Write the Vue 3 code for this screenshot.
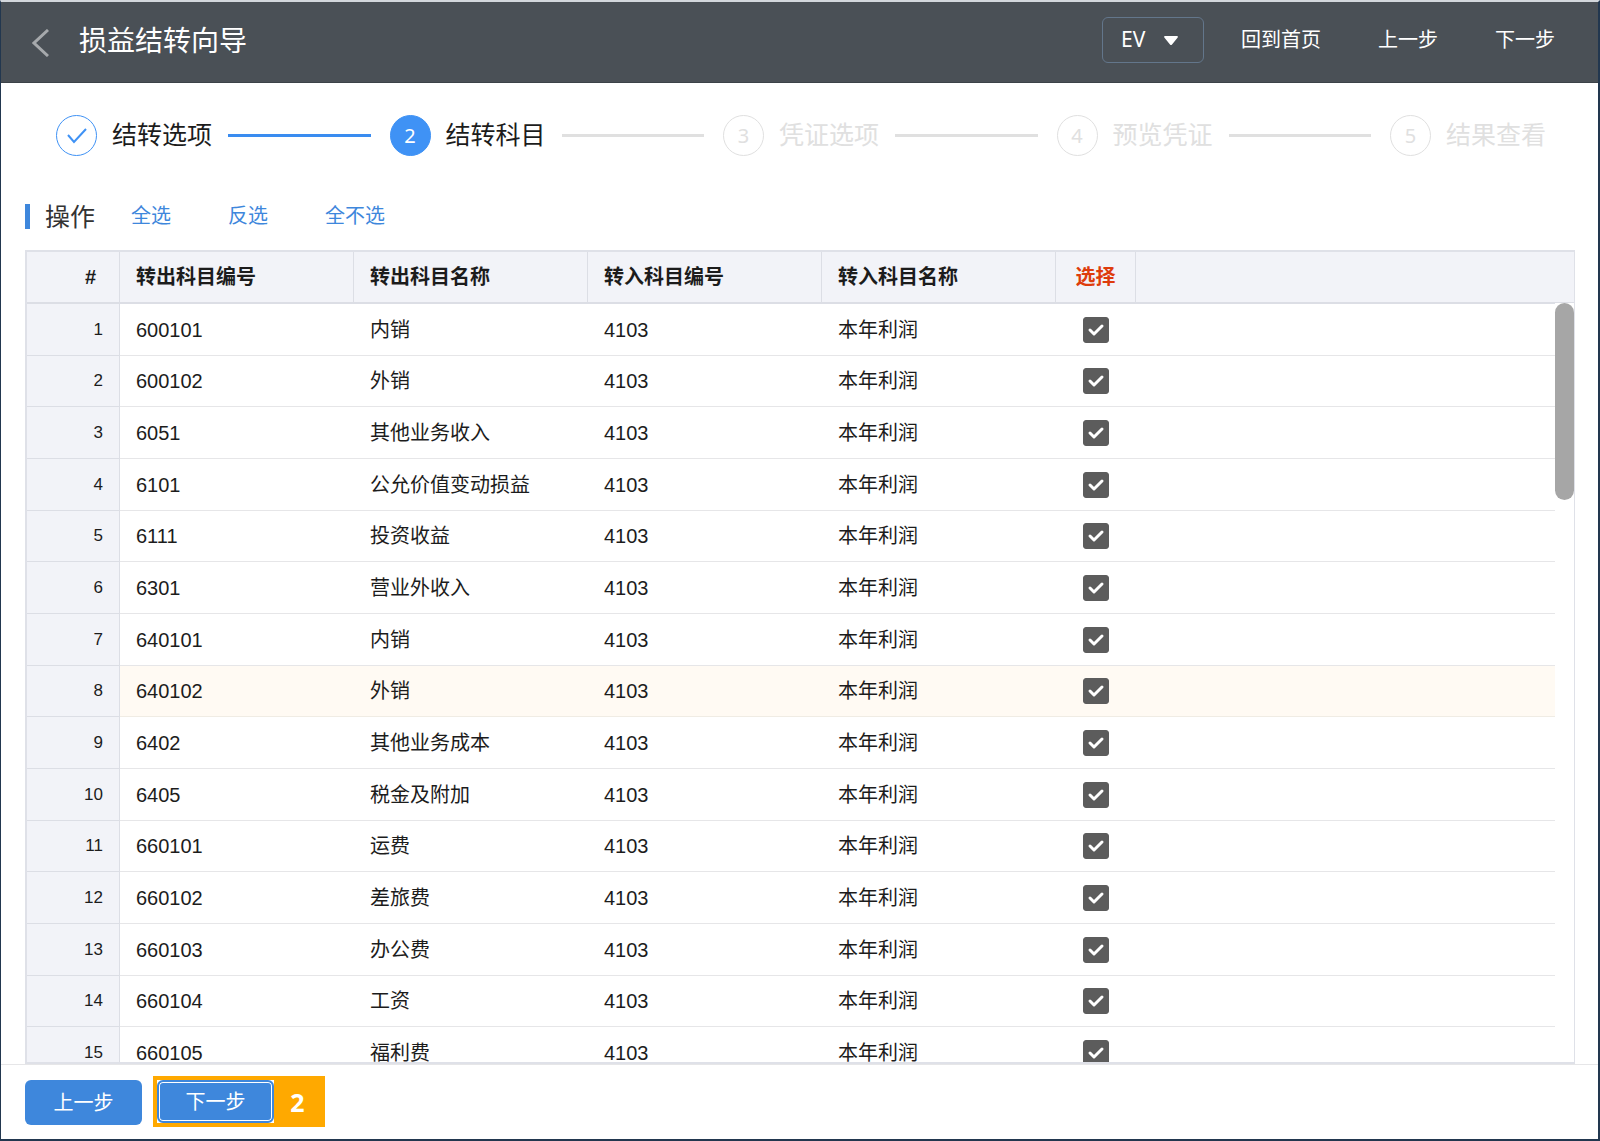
<script setup>
import { ref } from 'vue'

const company = ref('EV')
const navLinks = ['回到首页', '上一步', '下一步']

const steps = [
  { label: '结转选项', state: 'done' },
  { label: '结转科目', state: 'active' },
  { label: '凭证选项', state: 'todo' },
  { label: '预览凭证', state: 'todo' },
  { label: '结果查看', state: 'todo' },
]

const columns = ['转出科目编号', '转出科目名称', '转入科目编号', '转入科目名称']

const rows = ref(
  [
    ['600101', '内销'],
    ['600102', '外销'],
    ['6051', '其他业务收入'],
    ['6101', '公允价值变动损益'],
    ['6111', '投资收益'],
    ['6301', '营业外收入'],
    ['640101', '内销'],
    ['640102', '外销'],
    ['6402', '其他业务成本'],
    ['6405', '税金及附加'],
    ['660101', '运费'],
    ['660102', '差旅费'],
    ['660103', '办公费'],
    ['660104', '工资'],
    ['660105', '福利费'],
  ].map(([code, name]) => ({ code, name, toCode: '4103', toName: '本年利润', checked: true }))
)
const currentRow = ref(7)

function selectAll() {
  rows.value.forEach((r) => (r.checked = true))
}
function invert() {
  rows.value.forEach((r) => (r.checked = !r.checked))
}
function selectNone() {
  rows.value.forEach((r) => (r.checked = false))
}
</script>

<template>
  <div class="window">
    <header class="topbar">
      <button class="back" type="button" aria-label="返回">
        <svg width="17" height="28" viewBox="0 0 17 28" fill="none" stroke="#a6a9ac" stroke-width="3">
          <path d="M16 1 2 14l14 13" />
        </svg>
      </button>
      <h1>损益结转向导</h1>
      <div class="picker">
        <select v-model="company" aria-label="账套">
          <option>EV</option>
        </select>
        <svg class="caret" width="14" height="9" viewBox="0 0 14 9" fill="#fff">
          <path d="M1 0h12q1.500 .5 .5 1.700L8 8.400q-1 1-2 0L.5 1.700Q-.5 .5 1 0z" />
        </svg>
      </div>
      <nav>
        <a v-for="l in navLinks" :key="l" href="#">{{ l }}</a>
      </nav>
    </header>

    <ol class="steps">
      <li v-for="(s, i) in steps" :key="s.label" :class="s.state">
        <span class="dot">
          <svg v-if="s.state === 'done'" width="20" height="16" viewBox="0 0 20 16" fill="none" stroke="#3f92f5" stroke-width="2">
            <path d="M1 7l6 7L19 1" />
          </svg>
          <template v-else>{{ i + 1 }}</template>
        </span>
        <span class="label">{{ s.label }}</span>
        <span v-if="i < steps.length - 1" class="line"></span>
      </li>
    </ol>

    <div class="toolbar">
      <h2>操作</h2>
      <a href="#" @click.prevent="selectAll">全选</a>
      <a href="#" @click.prevent="invert">反选</a>
      <a href="#" @click.prevent="selectNone">全不选</a>
    </div>

    <main class="grid">
      <table>
        <colgroup>
          <col class="c-index" />
          <col v-for="c in columns" :key="c" class="c-data" />
          <col class="c-check" />
          <col />
        </colgroup>
        <thead>
          <tr>
            <th class="hash">#</th>
            <th v-for="c in columns" :key="c">{{ c }}</th>
            <th class="pick">选择</th>
            <th class="rest"></th>
          </tr>
        </thead>
        <tbody>
          <tr v-for="(r, i) in rows" :key="r.code" :class="{ current: i === currentRow }" @click="currentRow = i">
            <th scope="row">{{ i + 1 }}</th>
            <td>{{ r.code }}</td>
            <td>{{ r.name }}</td>
            <td>{{ r.toCode }}</td>
            <td>{{ r.toName }}</td>
            <td class="check">
              <label>
                <input v-model="r.checked" type="checkbox" :aria-label="'选择 ' + r.code" />
                <svg width="26" height="26" viewBox="0 0 26 26" fill="none" stroke="#fff" stroke-width="3" stroke-linecap="round" stroke-linejoin="round">
                  <path d="M7 13l4 4 8-8" />
                </svg>
              </label>
            </td>
            <td></td>
          </tr>
        </tbody>
      </table>
      <div class="track"><div class="thumb"></div></div>
    </main>

    <footer>
      <button class="action" type="button">上一步</button>
      <div class="callout">
        <div class="focus"><button class="action" type="button">下一步</button></div>
        <span>2</span>
      </div>
    </footer>
  </div>
</template>

<style>
body {
  margin: 0;
}
</style>

<style scoped>
* {
  box-sizing: border-box;
}
.window {
  display: flex;
  flex-direction: column;
  height: 100vh;
  overflow: hidden;
  border: 2px solid #22374f;
  border-top-color: #d3d7dc;
  border-left-width: 1px;
  background: #fff;
  color: #1c1c1c;
  font: 20px/28px "Noto Sans", "Noto Sans CJK SC", sans-serif;
}
button,
select {
  font: inherit;
}
a {
  text-decoration: none;
}

.topbar {
  flex: none;
  display: flex;
  align-items: flex-start;
  height: 81px;
  padding: 15px 43px 0 31px;
  background: #4a5056;
  border-bottom: 1px solid #3c4248;
  color: #fff;
}
.back {
  display: flex;
  margin-top: 12px;
  padding: 0;
  border: 0;
  background: none;
}
h1 {
  flex: 1;
  margin: 3px 0 0 30px;
  font-size: 28px;
  line-height: 40px;
  font-weight: 400;
}
.picker {
  position: relative;
  width: 102px;
  height: 46px;
}
.picker select {
  width: 100%;
  height: 100%;
  padding: 0 0 2px 18px;
  border: 1px solid #63768b;
  border-radius: 6px;
  background: none;
  color: #fff;
  font-size: 21px;
  appearance: none;
}
.caret {
  position: absolute;
  right: 26px;
  top: 19px;
}
nav {
  display: flex;
  gap: 57px;
  margin: 9px 0 0 37px;
}
nav a {
  color: #fff;
}

.steps {
  flex: none;
  display: flex;
  margin: 32px 52px 0 55px;
  padding: 0;
  list-style: none;
}
.steps li {
  flex: 1 1 156px;
  display: flex;
  align-items: center;
  color: #e0e0e0;
}
.steps li:last-child {
  flex: none;
}
.dot {
  flex: none;
  display: flex;
  align-items: center;
  justify-content: center;
  width: 41px;
  height: 41px;
  margin-right: 15px;
  border: 1px solid #e0e0e0;
  border-radius: 50%;
}
.label {
  padding-bottom: 4px;
  font-size: 25px;
}
.line {
  flex: 1;
  height: 3px;
  margin: 0 19px 0 16px;
  background: #e0e0e0;
}
.done .label,
.active .label {
  color: #1c1c1c;
}
.done .dot {
  border-color: #3f92f5;
}
.done .line {
  background: #3a8cf0;
}
.active .dot {
  border-color: #3f92f5;
  background: #3f92f5;
  color: #fff;
}

.toolbar {
  flex: none;
  display: flex;
  align-items: center;
  gap: 57px;
  margin: 46px 24px 0;
}
h2 {
  margin: 0 -21px 0 0;
  padding-left: 15px;
  border-left: 5px solid #3e87dc;
  font-size: 25px;
  line-height: 25px;
  font-weight: 400;
  color: #333;
}
.toolbar a {
  color: #3e87dc;
}

.grid {
  position: relative;
  flex: 1 1 0;
  min-height: 0;
  overflow: hidden;
  margin: 20px 23px 0 24px;
  border: 2px solid #dfe1e8;
  border-right-width: 1px;
}
table {
  width: 100%;
  table-layout: fixed;
  border-spacing: 0;
}
.c-index {
  width: 93px;
}
.c-data {
  width: 234px;
}
.c-check {
  width: 80px;
}
th,
td {
  padding: 0 0 0 16px;
  border-bottom: 1px solid #e6e6e8;
  text-align: left;
  line-height: 20px;
  white-space: nowrap;
  font-family: "Liberation Sans", "Noto Sans CJK SC", sans-serif;
}
tr > th {
  background: #f2f3f8;
  border-right: 1px solid #dcdee5;
}
thead th {
  height: 52px;
  border-bottom: 2px solid #dcdee5;
  color: #1c1c1c;
}
thead .rest {
  border-right: 0;
}
thead .hash {
  padding-right: 23px;
  text-align: right;
}
thead .pick {
  padding: 0;
  text-align: center;
  color: #de3c0c;
}
tbody tr {
  height: 52px;
}
tbody tr:nth-child(3n + 2) {
  height: 51px;
}
tbody th {
  padding-right: 16px;
  border-bottom-color: #dcdee5;
  text-align: right;
  font-size: 17px;
  font-weight: 400;
}
.current td {
  background: #fffaf3;
  border-bottom-color: #f0ece4;
}
td.check {
  padding: 0;
}
.check label {
  display: grid;
  justify-content: center;
}
.check input,
.check svg {
  grid-area: 1 / 1;
  width: 26px;
  height: 26px;
  margin: 0;
}
.check input {
  border: 1px solid #5c5c5c;
  border-radius: 3px;
  appearance: none;
}
.check svg {
  visibility: hidden;
  pointer-events: none;
}
.check input:checked {
  background: #5c5c5c;
}
.check input:checked + svg {
  visibility: visible;
}
.track {
  position: absolute;
  top: 51px;
  right: 0;
  bottom: 0;
  width: 19px;
  background: #fff;
}
.thumb {
  height: 26%;
  border-radius: 10px;
  background: #a6a6a6;
}

footer {
  flex: none;
  display: flex;
  gap: 11px;
  padding: 11px 24px 12px;
  border-top: 1px solid #e6e6e8;
}
.action {
  width: 117px;
  height: 45px;
  margin-top: 4px;
  padding: 0;
  border: 0;
  border-radius: 6px;
  background: #3e87dc;
  color: #fff;
}
.callout {
  display: flex;
  align-items: center;
  padding: 4px;
  background: #ffa900;
}
.focus {
  display: flex;
  background: #fff;
}
.focus .action {
  height: 43px;
  margin: 0;
  border: 2px solid #3e87dc;
  box-shadow: inset 0 0 0 1px #fff;
}
.callout span {
  width: 47px;
  font-size: 25px;
  font-weight: 700;
  text-align: center;
  color: #fff;
}
</style>
